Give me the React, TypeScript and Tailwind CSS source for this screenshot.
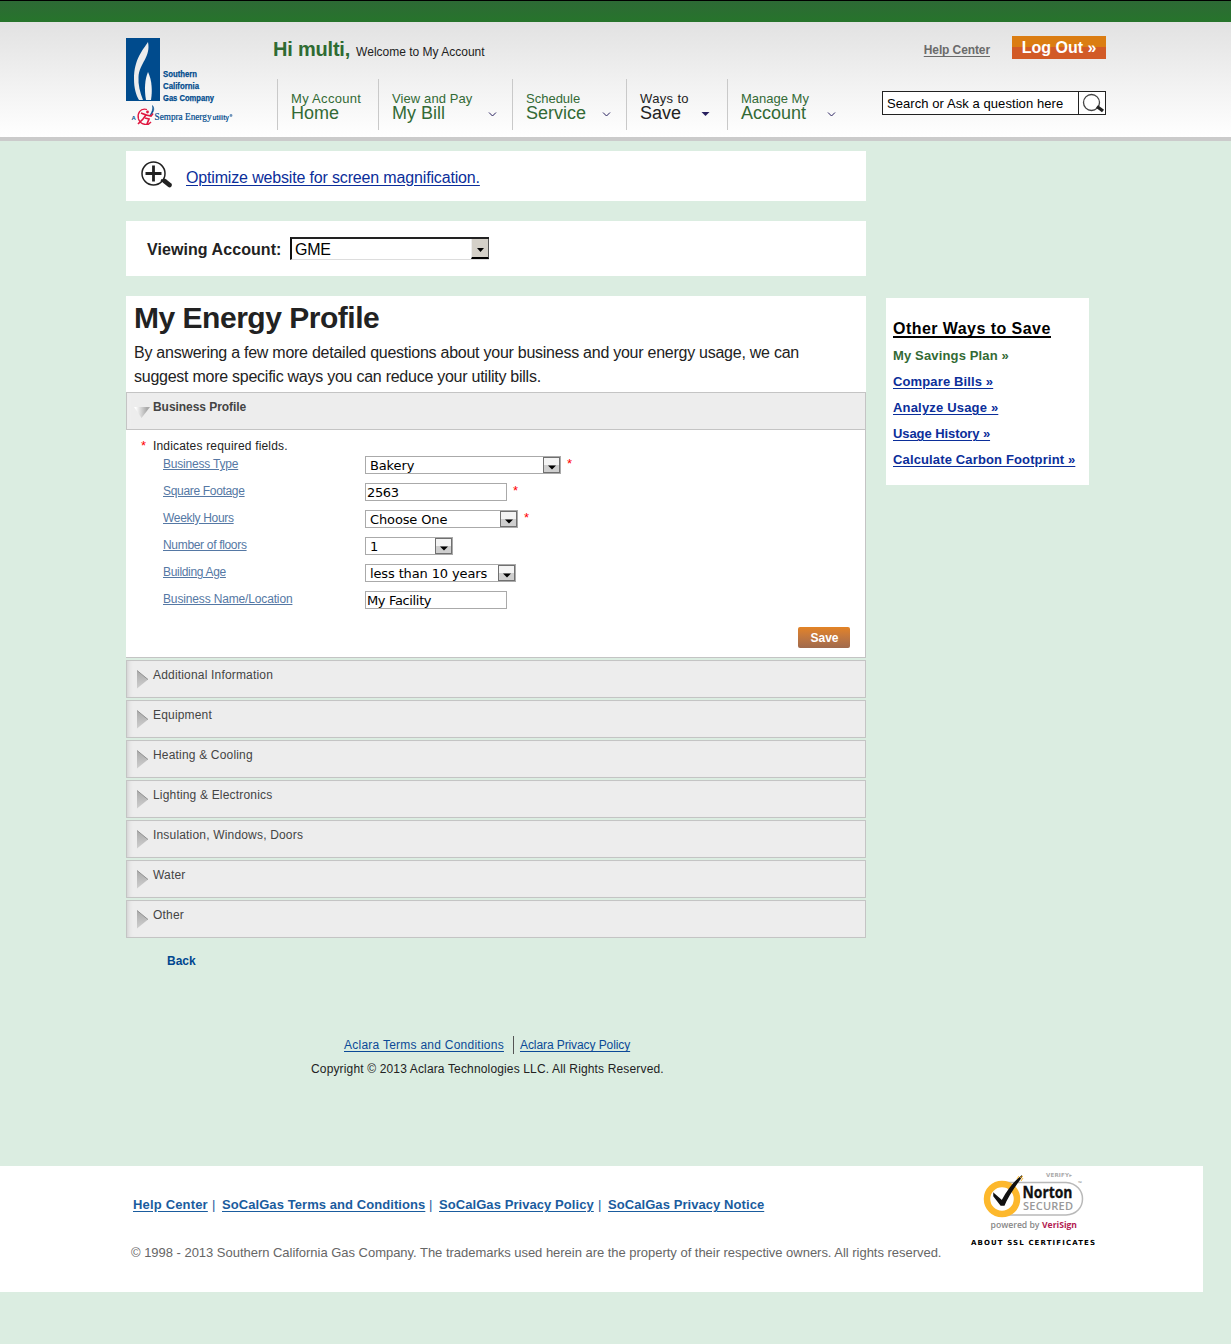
import React from "react";

const sans = "font-['Liberation_Sans',Arial,sans-serif]";

function Logo() {
  return (
    <svg width="110" height="90" viewBox="0 0 110 90" className="block shrink-0">
      <rect x="0" y="0" width="34" height="63" fill="#004b8d" />
      <path d="M22 4C17 12 8 21 8 41C8 50 10 57 13 62H17C14 54 12 47 12.500 39C13.500 25 25 19 22 4Z" fill="#ececec" />
      <path d="M22 34C19 41 18 51 20 62H25C26.500 53 26 42 22 34Z" fill="#f3f3f3" />
      <g fill="#004b8d" stroke="#004b8d" strokeWidth="0.25" fontFamily="'Liberation Sans',Arial,sans-serif" fontWeight="700" fontSize="9.4">
        <text x="37" y="39" textLength="34" lengthAdjust="spacingAndGlyphs">Southern</text>
        <text x="37" y="51" textLength="36" lengthAdjust="spacingAndGlyphs">California</text>
        <text x="37" y="62.5" textLength="51" lengthAdjust="spacingAndGlyphs">Gas Company</text>
      </g>
      <text x="5.500" y="82" fontFamily="'Liberation Sans',Arial,sans-serif" fontWeight="700" fontSize="6" fill="#004b8d">A</text>
      <path d="M21 71.500C14 69.500 11 76 12.500 81C14.500 87 22 88 25 84" fill="none" stroke="#e0163f" strokeWidth="1.300" />
      <path d="M15 75L20 77L17 81L12 86M20 77L25 78L27 75.500M19 80L23 81L21 86" fill="none" stroke="#e0163f" strokeWidth="1.700" />
      <circle cx="21.500" cy="74" r="1.400" fill="#e0163f" />
      <path d="M26.500 67.500C29 71 27.500 75 24 77C26 74 27.300 71 26.500 67.500Z" fill="#004b8d" stroke="#004b8d" strokeWidth="0.500" />
      <text x="28.500" y="82" textLength="57" lengthAdjust="spacingAndGlyphs" fontFamily="'Liberation Serif',serif" fontSize="10" fill="#004b8d" stroke="#004b8d" strokeWidth="0.200">Sempra Energy</text>
      <text x="86.500" y="82" textLength="16.500" lengthAdjust="spacingAndGlyphs" fontFamily="'Liberation Sans',Arial,sans-serif" fontWeight="700" fontSize="6.500" fill="#004b8d">utility</text>
      <circle cx="105" cy="77.500" r="1.400" fill="#6d93bb" />
    </svg>
  );
}

function NavItem({ top, title, width, color, arrow, arrowX, spacing }: { top: string; title: string; width: string; color: string; arrow?: string; arrowX?: string; spacing: string }) {
  return (
    <div className={`relative h-[51px] border-l border-[#c9c9c9] pl-[13px] pt-[12px] ${width} ${color}`}>
      <div className={`h-[14px] whitespace-nowrap text-[13px] leading-[16px] ${spacing}`}>{top}</div>
      <div className="whitespace-nowrap text-[18px] leading-[16px]">{title}</div>
      {arrow && (
        <svg width="9" height="6" viewBox="0 0 9 6" className={`absolute top-[32px] ${arrowX}`}>
          {arrow === "filled" ? <path d="M0.500 1H8.500L4.500 5Z" fill="#28205f" /> : <path d="M1 1.500L4.500 5L8 1.500" fill="none" stroke="#28205f" strokeWidth="1" />}
        </svg>
      )}
    </div>
  );
}

function Field({ label, value, width, required, input, labelSpacing = "tracking-[-0.32px]" }: { label: string; value: string; width: string; required?: boolean; input?: boolean; labelSpacing?: string }) {
  return (
    <div className="flex h-[27px] items-start">
      <a className={`w-[202px] whitespace-nowrap text-[12px] leading-[16px] text-[#5578a4] underline underline-offset-1 ${labelSpacing}`}>{label}</a>
      <div className={`flex h-[18px] items-center border border-[#aaa] bg-white font-['DejaVu_Sans',Verdana,sans-serif] text-[13px] leading-[16px] text-black ${width} ${input ? "pl-px tracking-[-0.35px]" : "pl-[4px] tracking-[-0.13px]"}`}>
        <span className="grow whitespace-nowrap pt-[2px]">{value}</span>
        {!input && (
          <span className="flex h-[16px] w-[17px] items-center justify-center border border-[#707070] bg-linear-to-b from-[#f4f4f4] from-50% to-[#cfcfcf] to-50%">
            <svg width="8" height="5" viewBox="0 0 8 5" className="mt-[4px]"><path d="M0 0.500H8L4 4.500Z" fill="#000" /></svg>
          </span>
        )}
      </div>
      {required && <span className="ml-[6px] text-[13px] leading-[15px] text-[#f00]">*</span>}
    </div>
  );
}

function Row({ label }: { label: string }) {
  return (
    <div className="flex h-[38px] border border-[#c4c4c4] bg-[#ededed] pl-[9px] shadow-[inset_5px_0_5px_-4px_#ccc]">
      <svg width="12" height="19" viewBox="0 0 12 19" className="mt-[9px]">
        <defs>
          <linearGradient id="arrowFill" x1="0" y1="0" x2="0" y2="1"><stop offset="0" stopColor="#aaa" /><stop offset="1" stopColor="#cfcfcf" /></linearGradient>
        </defs>
        <path d="M1 0.500L12 9.500L1 18.500Z" fill="url(#arrowFill)" />
        <path d="M1 0.500L12 9.500" stroke="#909090" strokeWidth="1" />
      </svg>
      <span className="ml-[5px] mt-[6px] text-[12px] leading-[16px] tracking-[0.18px] text-[#444]">{label}</span>
    </div>
  );
}

function NortonSeal() {
  return (
    <svg width="130" height="80" viewBox="0 0 130 80" className="block">
      <text x="76" y="7" textLength="26" fontFamily="'DejaVu Sans',sans-serif" fontSize="5.500" fontWeight="700" fill="#aaa">VERIFY▸</text>
      <path d="M35 12.500H96C118 14 118 44 96 45H35" fill="none" stroke="#b9b9b9" strokeWidth="1.500" />
      <circle cx="32" cy="29" r="15" fill="#fff" stroke="#fdb82c" strokeWidth="6.500" />
      <path d="M24 24L32 31C37 22 44 12 52 6C46 14 38 25 34 35H31L24 26Z" fill="#111" stroke="#111" strokeWidth="1.500" />
      <path d="M50 8l3-2M51 11l2-3M47 9l2-3" stroke="#fdb82c" strokeWidth="1" />
      <g fontFamily="'Open Sans','Noto Sans',sans-serif">
        <text x="52.500" y="28" textLength="50" lengthAdjust="spacingAndGlyphs" fontSize="15.500" fontWeight="700" fill="#111" stroke="#111" strokeWidth="0.300">Norton</text>
        <text x="53" y="39.500" textLength="50" fontSize="11" fontWeight="600" fill="#999">SECURED</text>
        <text x="20.500" y="58" textLength="49" lengthAdjust="spacingAndGlyphs" fontSize="9" fontWeight="600" fill="#888">powered by</text>
        <text x="72" y="58" textLength="35" lengthAdjust="spacingAndGlyphs" fontSize="9" fontWeight="700" fill="#b31b51">VeriSign</text>
        <text x="108" y="15" fontSize="5" fill="#888">™</text>
      </g>
      <text x="1" y="75" textLength="124" fontFamily="'DejaVu Sans',Verdana,sans-serif" fontSize="7" fontWeight="700" fill="#000">ABOUT SSL CERTIFICATES</text>
    </svg>
  );
}

const rows = ["Additional Information", "Equipment", "Heating & Cooling", "Lighting & Electronics", "Insulation, Windows, Doors", "Water", "Other"];

export default function App() {
  return (
    <div className={`h-[1344px] w-[1231px] overflow-hidden bg-[#dbede1] text-[#222] ${sans}`}>
      <div className="h-[22px] border-t border-black bg-linear-to-b from-[#2d6a35] to-[#26742b]" />
      <header className="flex h-[119px] border-b-4 border-[#cbcbcb] bg-linear-to-b from-[#e2e2e2] to-white pl-[126px]">
        <div className="w-[147px] pt-[16px]"><Logo /></div>
        <div className="w-[609px]">
          <div className="flex h-[57px] items-baseline pt-[14px]">
            <span className="text-[20px] font-bold leading-[26px] tracking-[-0.2px] text-[#2f6b32]">Hi multi,</span>
            <span className="ml-[6px] text-[12px] leading-[16px]">Welcome to My Account</span>
          </div>
          <nav className="flex pl-[4px]">
            <NavItem top="My Account" title="Home" width="w-[101px]" color="text-[#336a35]" spacing="tracking-[0.3px]" />
            <NavItem top="View and Pay" title="My Bill" width="w-[134px]" color="text-[#336a35]" arrow="open" arrowX="left-[109px]" spacing="tracking-[0.1px]" />
            <NavItem top="Schedule" title="Service" width="w-[114px]" color="text-[#336a35]" arrow="open" arrowX="left-[89px]" spacing="tracking-[0px]" />
            <NavItem top="Ways to" title="Save" width="w-[101px]" color="text-[#222]" arrow="filled" arrowX="left-[74px]" spacing="tracking-[0.35px]" />
            <NavItem top="Manage My" title="Account" width="w-[120px]" color="text-[#336a35]" arrow="open" arrowX="left-[99px]" spacing="tracking-[0px]" />
          </nav>
        </div>
        <div className="w-[224px] pt-[14px]">
          <div className="flex justify-end">
            <a className="mr-[22px] mt-[6px] text-[12px] font-bold leading-[16px] tracking-[-0.1px] text-[#6b6b6b] underline underline-offset-2">Help Center</a>
            <button className="h-[23px] w-[94px] whitespace-nowrap bg-linear-to-b from-[#db7d12] from-50% to-[#d25a26] to-50% text-[16px] font-bold leading-[22px] text-white">Log Out »</button>
          </div>
          <div className="mt-[32px] flex h-[24px] border border-[#222] bg-white">
            <div className="w-[196px] whitespace-nowrap border-r border-[#222] pl-[4px] text-[13px] leading-[23px] tracking-[0.07px] text-black">Search or Ask a question here</div>
            <svg width="25" height="22" viewBox="0 0 25 22"><circle cx="12.500" cy="10.500" r="8" fill="#fff" stroke="#444" strokeWidth="1.300" /><path d="M18 14.500L24 19" stroke="#222" strokeWidth="3.400" /></svg>
          </div>
        </div>
      </header>

      <main className="flex h-[1025px] pl-[126px] pt-[10px]">
        <div className="w-[740px]">
          <section className="flex h-[50px] bg-white pl-[14px]">
            <svg width="33" height="30" viewBox="0 0 33 30" className="mt-[9px]"><circle cx="13.500" cy="13.500" r="11.500" fill="#fff" stroke="#222" strokeWidth="1.500" /><path d="M5.500 13.500H21.500M13.500 5.500V21.500" stroke="#222" strokeWidth="2.800" /><path d="M21 20L25 22" stroke="#222" strokeWidth="2" /><path d="M24.500 21L29.500 25" stroke="#222" strokeWidth="4.800" strokeLinecap="round" /></svg>
            <a className="ml-[13px] mt-[17px] text-[16px] leading-[20px] tracking-[-0.16px] text-[#0b2e9a] underline underline-offset-2">Optimize website for screen magnification.</a>
          </section>
          <section className="mt-5 flex h-[55px] bg-white pl-[21px]">
            <span className="w-[143px] pt-[19px] text-[16px] font-bold leading-[20px] tracking-[0.07px]">Viewing Account:</span>
            <div className="mt-[16px] flex h-[23px] w-[199px] border-b border-l-2 border-t-2 border-b-[#ddd] border-l-[#111] border-t-[#222] bg-white pl-[3px] text-[16px] leading-[22px] text-black">
              <span className="grow tracking-[-0.2px]">GME</span>
              <span className="flex h-[20px] w-[18px] items-center justify-center border-b-2 border-l border-r border-b-black border-l-[#eee] border-r-[#555] bg-[#d4d0c8]"><svg width="7" height="4" viewBox="0 0 7 4" className="mt-[3px]"><path d="M0 0H7L3.500 4Z" fill="#000" /></svg></span>
            </div>
          </section>
          <section className="mt-5 h-[96px] bg-white pl-[8px] pt-[4px]">
            <h1 className="h-[41px] text-[30px] font-bold leading-[36px] tracking-[-0.48px]">My Energy Profile</h1>
            <p className="whitespace-nowrap text-[16px] leading-[24px] tracking-[-0.255px]">By answering a few more detailed questions about your business and your energy usage, we can<br />suggest more specific ways you can reduce your utility bills.</p>
          </section>
          <div className="flex h-[38px] border border-[#c4c4c4] bg-[#ededed] pl-[6px] shadow-[inset_5px_0_5px_-4px_#eee]">
            <svg width="17" height="12" viewBox="0 0 17 12" className="mt-[14px]"><defs><linearGradient id="openFill"><stop offset="0.100" stopColor="#fff" /><stop offset="0.800" stopColor="#aaa" /></linearGradient></defs><path d="M1 0H17L8.500 11Z" fill="url(#openFill)" /></svg>
            <span className="ml-[3px] mt-[6px] text-[12px] font-bold leading-[16px] tracking-[-0.05px] text-[#444]">Business Profile</span>
          </div>
          <div className="h-[228px] border-b border-r border-[#c4c4c4] bg-white pt-[8px]">
            <div className="flex h-[18px] pl-[15px] text-[12px] leading-[16px]"><span className="w-[12px] text-[13px] text-[#f00]">*</span><span className="tracking-[0.18px]">Indicates required fields.</span></div>
            <div className="pl-[37px]">
              <Field label="Business Type" value="Bakery" width="w-[196px]" required labelSpacing="tracking-[-0.2px]" />
              <Field label="Square Footage" value="2563" width="w-[142px]" input required />
              <Field label="Weekly Hours" value="Choose One" width="w-[153px]" required />
              <Field label="Number of floors" value="1" width="w-[88px]" />
              <Field label="Building Age" value="less than 10 years" width="w-[151px]" />
              <Field label="Business Name/Location" value="My Facility" width="w-[142px]" input labelSpacing="tracking-[-0.15px]" />
            </div>
            <div className="flex justify-end pr-[15px] pt-[9px]"><button className="h-[21px] w-[52px] rounded-[2px] bg-linear-to-b from-[#e38324] to-[#a06a4c] pt-px pl-px text-[12px] font-bold leading-[20px] text-white">Save</button></div>
          </div>
          <div className="mt-[2px] flex flex-col gap-[2px]">{rows.map((r) => <Row key={r} label={r} />)}</div>
          <a className="ml-[41px] mt-[15px] block text-[12px] font-bold leading-[16px] text-[#00478f]">Back</a>
          <div className="mt-[67px] flex pl-[218px] text-[12px] text-[#0b4a97]">
            <a className="h-[18px] w-[169px] whitespace-nowrap leading-[18px] tracking-[0.25px] underline underline-offset-2">Aclara Terms and Conditions</a>
            <a className="h-[18px] whitespace-nowrap border-l border-[#555] pl-[6px] leading-[18px] tracking-[-0.09px] underline underline-offset-2">Aclara Privacy Policy</a>
          </div>
          <p className="mt-[7px] pl-[185px] text-[12px] leading-[16px] tracking-[0.15px]">Copyright © 2013 Aclara Technologies LLC. All Rights Reserved.</p>
        </div>
        <aside className="ml-5 mt-[147px] h-[187px] w-[203px] bg-white pl-[7px] pt-[20px]">
          <h2 className="h-[25px] text-[16px] font-bold leading-[21px] tracking-[0.45px] text-black"><span className="inline-block h-[20px] whitespace-nowrap border-b-2 border-black">Other Ways to Save</span></h2>
          <div className="flex flex-col whitespace-nowrap text-[13px] font-bold leading-[26px] text-[#0b2e9a]">
            <a className="tracking-[0.15px] text-[#336a35]">My Savings Plan »</a>
            <a className="self-start tracking-[0.13px] underline underline-offset-2">Compare Bills »</a>
            <a className="self-start tracking-[0.18px] underline underline-offset-2">Analyze Usage »</a>
            <a className="self-start tracking-[-0.08px] underline underline-offset-2">Usage History »</a>
            <a className="self-start tracking-[0.14px] underline underline-offset-2">Calculate Carbon Footprint »</a>
          </div>
        </aside>
      </main>

      <footer className="flex h-[126px] w-[1203px] bg-white pl-[131px]">
        <div className="w-[839px] pt-[29px]">
          <div className="flex h-[50px] whitespace-nowrap pl-[2px] text-[13px] font-bold leading-[20px] tracking-[0.07px] text-[#1a5c9e]">
            <a className="w-[79px] tracking-[0.17px] underline underline-offset-2">Help Center</a><span className="w-[10px] font-normal">|</span>
            <a className="w-[207px] underline underline-offset-2">SoCalGas Terms and Conditions</a><span className="w-[10px] font-normal">|</span>
            <a className="w-[159px] underline underline-offset-2">SoCalGas Privacy Policy</a><span className="w-[10px] font-normal">|</span>
            <a className="underline underline-offset-2">SoCalGas Privacy Notice</a>
          </div>
          <p className="whitespace-nowrap text-[13px] leading-[16px] tracking-[-0.026px] text-[#666]">© 1998 - 2013 Southern California Gas Company. The trademarks used herein are the property of their respective owners. All rights reserved.</p>
        </div>
        <div className="pt-[4px]"><NortonSeal /></div>
      </footer>
    </div>
  );
}
